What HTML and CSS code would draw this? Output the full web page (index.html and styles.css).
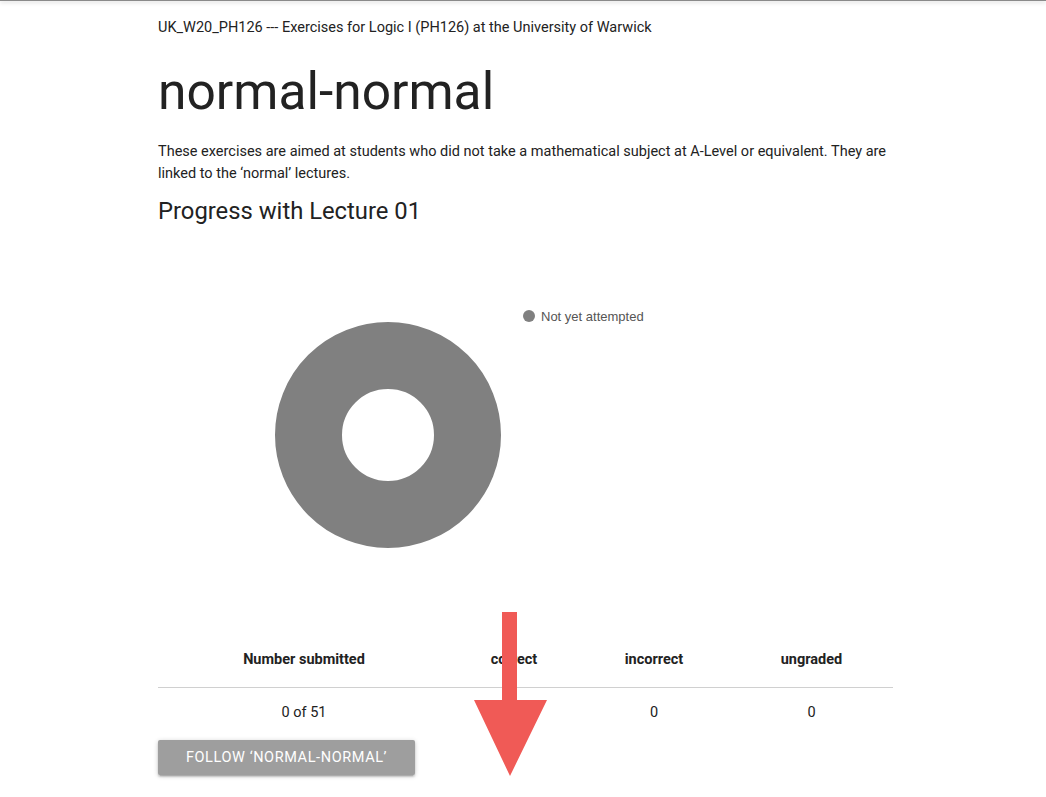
FILE: index.html
```html
<!DOCTYPE html>
<html lang="en">
<head>
<meta charset="utf-8">
<title>normal-normal</title>
<link rel="stylesheet" href="styles.css">
</head>
<body>
<div class="topbar"></div>
<main class="container">
  <div class="breadcrumb">UK_W20_PH126 --- Exercises for Logic I (PH126) at the University of Warwick</div>
  <h1 class="title">normal-normal</h1>
  <p class="intro">These exercises are aimed at students who did not take a mathematical subject at A-Level or equivalent. They are linked to the ‘normal’ lectures.</p>
  <h2 class="subtitle">Progress with Lecture 01</h2>
  <div class="chart">
    <svg class="donut" width="735" height="396" viewBox="0 0 735 396">
      <circle cx="230" cy="200" r="79.5" fill="none" stroke="#808080" stroke-width="67"/>
      <circle cx="371" cy="81" r="6" fill="#808080"/>
      <text x="383" y="85.5" class="legend">Not yet attempted</text>
    </svg>
  </div>
  <table class="stats">
    <thead>
      <tr><th class="c1">Number submitted</th><th class="c2">correct</th><th class="c3">incorrect</th><th class="c4">ungraded</th></tr>
    </thead>
    <tbody>
      <tr><td>0 of 51</td><td>0</td><td>0</td><td>0</td></tr>
    </tbody>
  </table>
  <button class="follow">Follow ‘normal-normal’</button>
  <div class="links"><a href="#">Lecture notes</a> <a href="#">Back to course</a></div>
  <svg class="arrow" width="74" height="166" viewBox="0 0 74 166">
    <polygon points="28,0 43,0 43,88 73,88 36,164 0,88 28,88" fill="#f05a56"/>
  </svg>
</main>
</body>
</html>
```
FILE: styles.css
```css
html, body {
  margin: 0;
  padding: 0;
  background: #fff;
}
body {
  font-family: Roboto, "Noto Sans", sans-serif;
  color: rgba(0,0,0,0.87);
  font-size: 14.5px;
  line-height: 1.5;
  height: 797px;
  overflow: hidden;
}
.topbar {
  height: 1px;
  background: #8a8a8a;
  box-shadow: 0 1px 4px rgba(0,0,0,0.35);
}
.container {
  position: relative;
  width: 735px;
  margin-left: 158px;
}
.breadcrumb {
  padding-top: 17px;
  line-height: 20px;
  color: #222;
}
.title {
  font-size: 51.5px;
  font-weight: 400;
  line-height: 60px;
  margin: 24px 0 19px;
  color: #222;
}
.intro {
  margin: 0;
  line-height: 22px;
  color: #222;
}
.subtitle {
  font-size: 23.8px;
  font-weight: 400;
  line-height: 32px;
  margin: 10px 0 0;
  color: #222;
}
.chart {
  height: 397px;
  margin-top: 8px;
}
.donut {
  display: block;
}
.legend {
  font-family: "Liberation Sans", Arial, sans-serif;
  font-size: 13px;
  fill: #555;
}
.stats {
  width: 100%;
  table-layout: fixed;
  border-collapse: collapse;
  color: #222;
}
.stats th {
  font-weight: 700;
  text-align: center;
  height: 55px;
  padding: 0;
  border-bottom: 1px solid #d0d0d0;
}
.stats td {
  text-align: center;
  height: 50px;
  padding: 0;
}
.c1 { width: 292px; }
.c2 { width: 128px; }
.c3 { width: 152px; }
.c4 { width: 163px; }
.follow {
  display: block;
  margin-top: 2px;
  width: 257px;
  height: 35px;
  border: none;
  border-radius: 2px;
  background: #9e9e9e;
  color: #fff;
  font-family: Roboto, sans-serif;
  font-size: 14.5px;
  letter-spacing: 0.6px;
  text-transform: uppercase;
  box-shadow: 0 2px 2px rgba(0,0,0,0.14), 0 3px 1px -2px rgba(0,0,0,0.12), 0 1px 5px rgba(0,0,0,0.2);
}
.links {
  margin-top: 18px;
  color: #039be5;
}
.links a {
  color: #039be5;
  text-decoration: none;
  margin-right: 100px;
}
.arrow {
  position: absolute;
  left: 316px;
  top: 611px;
}
```
